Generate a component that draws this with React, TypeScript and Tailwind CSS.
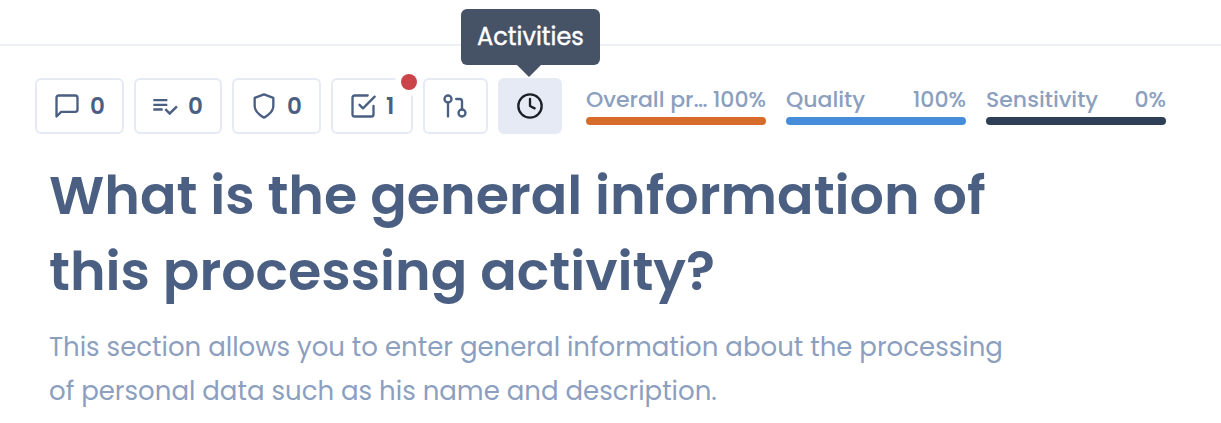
import React from "react";
import type { ReactNode } from "react";

function Icon({ children }: { children: ReactNode }) {
  return (
    <svg
      className="size-7 shrink-0"
      viewBox="0 0 24 24"
      fill="none"
      stroke="currentColor"
      strokeWidth="2"
      strokeLinecap="round"
      strokeLinejoin="round"
    >
      {children}
    </svg>
  );
}

const button =
  "relative flex h-14 shrink-0 items-center gap-[9px] rounded-md border-2 border-[#e6eaf5] pl-4 text-[#4a5f82]";
const count = "text-[23px] leading-none font-semibold";

type MeterProps = { label: string; value: string; bar: string };

function Meter({ label, value, bar }: MeterProps) {
  return (
    <div className="flex w-[180px] flex-col">
      <div className="flex h-[29px] items-center justify-between text-[22px] leading-[29px] font-medium whitespace-nowrap text-[#8c9fbf]">
        <span>{label}</span>
        <span>{value}</span>
      </div>
      <div className={`mt-[3px] h-2 rounded-full ${bar}`} />
    </div>
  );
}

export default function App() {
  return (
    <div className="h-[423px] w-[1221px] overflow-hidden bg-white font-[Poppins,Inter,sans-serif]">
      <header className="h-[46px] border-b-2 border-[#edf1f6]" />

      <div className="flex items-start pt-8 pl-[35px]">
        <div className="flex">
          <button className={`${button} mr-2.5 w-[89px]`}>
            <Icon>
              <path d="M21 15a2 2 0 0 1-2 2H7l-4 4V5a2 2 0 0 1 2-2h14a2 2 0 0 1 2 2z" />
            </Icon>
            <span className={count}>0</span>
          </button>

          <button className={`${button} mr-2.5 w-[88px]`}>
            <svg className="-ml-px size-7 shrink-0" viewBox="0 0 24 24" fill="currentColor">
              <path d="M14 10H2v2h12v-2zm0-4H2v2h12V6zM2 16h8v-2H2v2zm19.5-4.5L23 13l-6.99 7-4.51-4.5L13 14l3.01 3 5.49-5.5z" />
            </svg>
            <span className={count}>0</span>
          </button>

          <button className={`${button} mr-2.5 w-[89px]`}>
            <Icon>
              <path d="M12 22s8-4 8-10V5l-8-3-8 3v7c0 6 8 10 8 10z" />
            </Icon>
            <span className={count}>0</span>
          </button>

          <button className={`${button} mr-2.5 w-[82px]`}>
            <Icon>
              <path d="M9 11l3 3L22 4" />
              <path d="M21 12v7a2 2 0 0 1-2 2H5a2 2 0 0 1-2-2V5a2 2 0 0 1 2-2h11" />
            </Icon>
            <span className={count}>1</span>
            <span className="absolute -top-[12px] -right-[12px] flex size-7 items-center justify-center rounded-full bg-white">
              <span className="size-4 rounded-full bg-[#cb444a]" />
            </span>
          </button>

          <button className={`${button} mr-2.5 w-[65px]`}>
            <Icon>
              <circle cx="18" cy="18" r="3" />
              <circle cx="6" cy="6" r="3" />
              <path d="M13 6h3a2 2 0 0 1 2 2v7" />
              <path d="M6 9v12" />
            </Icon>
          </button>

          <button className="relative flex h-14 w-16 items-center rounded-md bg-[#e6eaf5] pl-[17.5px] text-[#1c1f26]">
            <Icon>
              <circle cx="12" cy="12" r="10" />
              <path d="M12 6v6l4 2" />
            </Icon>
            <span className="absolute -top-[69px] -left-[37px] flex h-14 w-[139px] items-center justify-center rounded-md bg-[#465266] text-2xl text-white [-webkit-text-stroke:0.4px_white]">
              Activities
              <svg className="absolute top-full left-14 h-3 w-6" viewBox="0 0 24 12" fill="#465266">
                <path d="M0 0h24L12 12z" />
              </svg>
            </span>
          </button>
        </div>

        <div className="ml-6 flex gap-5 pt-[7px]">
          <Meter label="Overall pr…" value="100%" bar="bg-[#d76b2c]" />
          <Meter label="Quality" value="100%" bar="bg-[#458cdb]" />
          <Meter label="Sensitivity" value="0%" bar="bg-[#2f3f57]" />
        </div>
      </div>

      <main className="pt-[23px] pl-[49px] whitespace-nowrap">
        <h1 className="text-[53.95px] leading-[76px] font-semibold text-[#4a5f82]">
          What is the general information of
          <br />
          this processing activity?
        </h1>
        <p className="mt-4 text-[26px] leading-[44px] text-[#8c9fbf]">
          This section allows you to enter general information about the processing
          <br />
          of personal data such as his name and description.
        </p>
      </main>
    </div>
  );
}
